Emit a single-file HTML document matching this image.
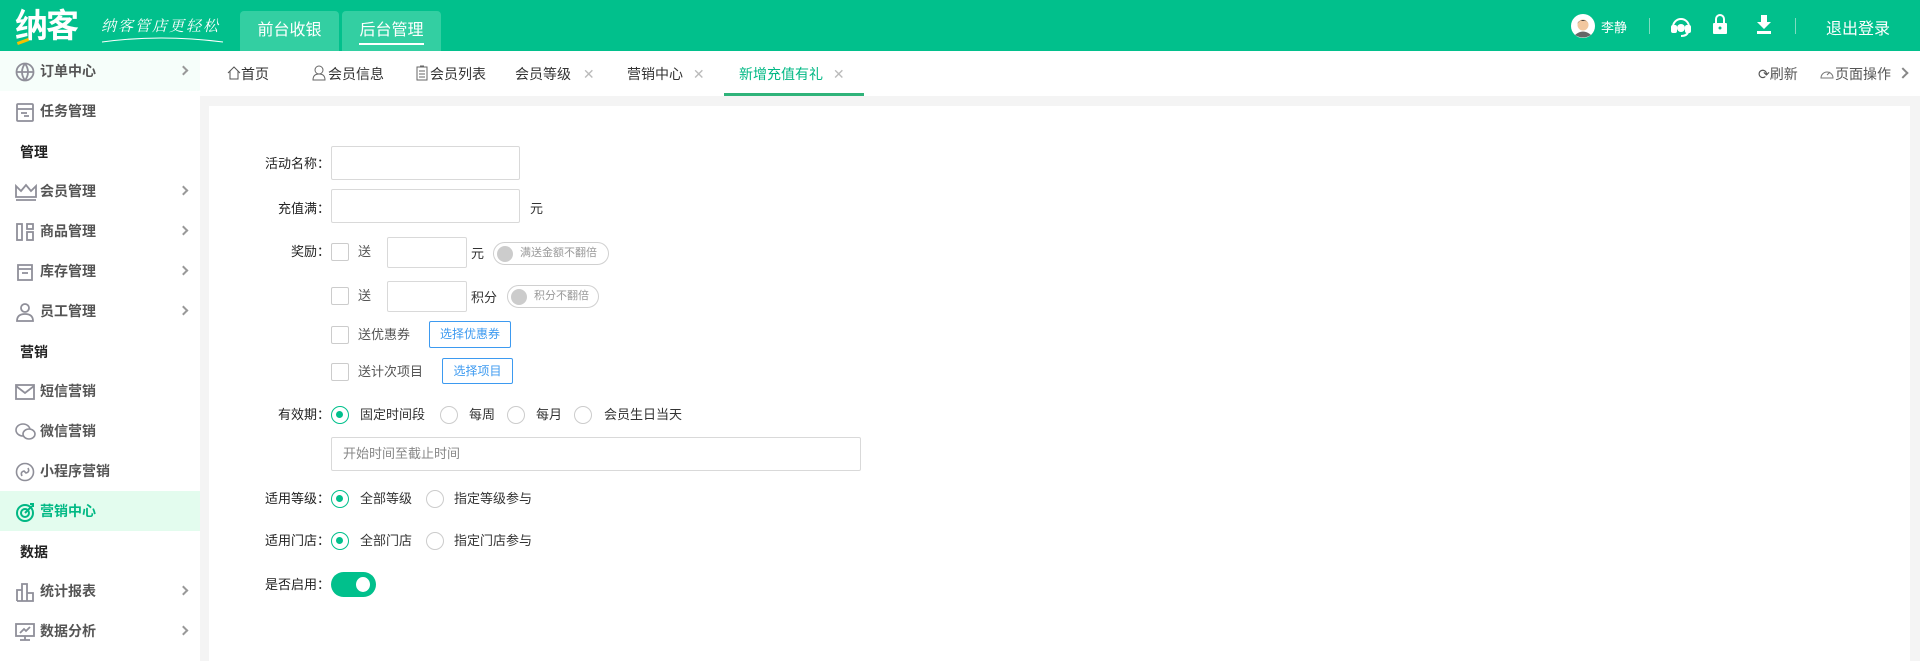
<!DOCTYPE html>
<html><head><meta charset="utf-8"><style>
*{margin:0;padding:0;box-sizing:border-box}
body{width:1920px;height:661px;overflow:hidden;background:#f4f4f4;font-family:"Liberation Sans","Noto Sans CJK SC",sans-serif;position:relative}
.a{position:absolute;white-space:nowrap}
#hd{position:absolute;left:0;top:0;width:1920px;height:51px;background:#01c08c}
.tt{position:absolute;top:11px;height:40px;width:99px;background:#33cfa2;border-radius:4px 4px 0 0;color:#fff;font-size:16px;text-align:center;line-height:40px}
#sb{position:absolute;left:0;top:51px;width:200px;height:610px;background:#fff}
.si{position:absolute;left:0;width:200px;height:40px;font-size:14px;color:#555;font-weight:bold}
.si svg{position:absolute;left:15px;top:11px}
.si span{position:absolute;left:40px;top:11px;line-height:18px}
.si i{position:absolute;left:180px;top:16px;width:7px;height:7px;border-top:2px solid #999;border-right:2px solid #999;transform:rotate(45deg)}
.sh{position:absolute;left:20px;font-size:14px;color:#222;font-weight:bold}
#tb{position:absolute;left:200px;top:51px;width:1720px;height:45px;background:#fff}
.tab{position:absolute;top:14px;font-size:14px;color:#333;line-height:18px}
.x{color:#bbb;font-size:14px}
#ct{position:absolute;left:209px;top:106px;width:1701px;height:555px;background:#fff}
.f{font-size:13px;color:#333;line-height:16px}
.lb{position:absolute;width:140px;text-align:right;left:190px;font-size:13px;color:#222;line-height:16px}
.in{position:absolute;border:1px solid #d9d9d9;border-radius:2px;background:#fff}
.cb{position:absolute;width:18px;height:18px;border:1px solid #ccc;border-radius:2px;background:#fff}
.rd{position:absolute;width:18px;height:18px;border:1.5px solid #ccc;border-radius:50%;background:#fff}
.rd.on{border-color:#01c08c}
.rd.on:after{content:"";position:absolute;left:4px;top:4px;width:7px;height:7px;border-radius:50%;background:#01c08c}
.pill{position:absolute;height:23px;border:1px solid #d0d0d0;border-radius:12px;background:#fff;font-size:11px;color:#999;line-height:21px;padding-left:26px;white-space:nowrap}
.pill:before{content:"";position:absolute;left:3px;top:3px;width:16px;height:16px;border-radius:50%;background:#ccc}
.btn{position:absolute;border:1px solid #3d9af0;border-radius:2px;color:#3d9af0;font-size:12px;text-align:center;white-space:nowrap}
</style></head><body>
<div id="hd">
 <div class="a" style="left:15px;top:8px;font-size:33px;font-weight:bold;color:#fff;letter-spacing:-2px;line-height:36px">纳客</div>
 <div class="a" style="left:17px;top:40px;width:12px;height:3px;background:#f5c000;transform:rotate(-20deg)"></div>
 <div class="a" style="left:101px;top:15px;font-size:15px;color:#fff;font-style:italic;letter-spacing:2px;font-family:'Liberation Serif','Noto Serif CJK SC',serif">纳客管店更轻松</div>
 <svg class="a" style="left:100px;top:34px" width="125" height="10"><path d="M2 8 Q60 0 123 8" stroke="#fff" stroke-width="1" fill="none"/></svg>
 <div class="tt" style="left:240px">前台收银</div>
 <div class="tt" style="left:342px">后台管理<div style="position:absolute;left:17px;right:17px;top:32px;height:2px;background:#fff"></div></div>
 <svg class="a" style="left:1571px;top:14px" width="24" height="24"><circle cx="12" cy="12" r="12" fill="#fff"/><circle cx="12" cy="11" r="5.5" fill="#f2c8a0"/><path d="M6 10 Q12 2 18 10 Q15 6 12 7 Q8 6 6 10Z" fill="#333"/><path d="M4 21 Q12 14 20 21 Q12 26 4 21Z" fill="#666"/></svg>
 <div class="a" style="left:1601px;top:17px;font-size:13px;color:#fff">李静</div>
 <div class="a" style="left:1649px;top:18px;width:1px;height:16px;background:#7edcc0"></div>
 <svg class="a" style="left:1670px;top:14px" width="22" height="24" fill="none" stroke="#fff" stroke-width="2"><path d="M3 13 A8 8 0 0 1 19 13"/><rect x="2" y="12" width="4" height="6" rx="1" fill="#fff"/><rect x="16" y="12" width="4" height="6" rx="1" fill="#fff"/><path d="M18 18 Q17 22 11 22"/><circle cx="11" cy="14" r="4" fill="#fff" stroke="none"/></svg>
 <svg class="a" style="left:1712px;top:13px" width="16" height="22"><path d="M4 10 V6 A4 4 0 0 1 12 6 V10" stroke="#fff" stroke-width="2" fill="none"/><rect x="1" y="10" width="14" height="11" rx="1" fill="#fff"/><circle cx="8" cy="15" r="1.5" fill="#01c08c"/></svg>
 <svg class="a" style="left:1756px;top:14px" width="16" height="22" fill="#fff"><path d="M5 1 H11 V8 H15 L8 15 L1 8 H5Z"/><rect x="1" y="17" width="14" height="3"/></svg>
 <div class="a" style="left:1795px;top:18px;width:1px;height:16px;background:#7edcc0"></div>
 <div class="a" style="left:1826px;top:15px;font-size:16px;color:#fff">退出登录</div>
</div>
<div id="sb">
 <div class="si" style="top:0;background:#f6fefa"><svg width="20" height="20" fill="none" stroke="#8f8f99" stroke-width="1.8"><circle cx="10" cy="10" r="8.5"/><path d="M1.5 10 H18.5 M10 1.5 Q4 10 10 18.5 M10 1.5 Q16 10 10 18.5"/></svg><span>订单中心</span><i></i></div>
 <div class="si" style="top:40px"><svg width="20" height="20" fill="none" stroke="#8f8f99" stroke-width="1.8"><rect x="2" y="2" width="16" height="17" rx="1"/><path d="M2 7 H18 M6 11 H12 M9 14 H14"/></svg><span>任务管理</span></div>
 <div class="sh" style="top:91px">管理</div>
 <div class="si" style="top:120px"><svg width="22" height="20" fill="none" stroke="#8f8f99" stroke-width="1.8"><path d="M1 15 V4 L6 9 L11 3 L16 9 L21 4 V15Z"/><path d="M1 18 H21"/></svg><span>会员管理</span><i></i></div>
 <div class="si" style="top:160px"><svg width="20" height="20" fill="none" stroke="#8f8f99" stroke-width="1.8"><rect x="2" y="2" width="5" height="16"/><rect x="12" y="2" width="6" height="5"/><rect x="12" y="10" width="6" height="8"/></svg><span>商品管理</span><i></i></div>
 <div class="si" style="top:200px"><svg width="20" height="20" fill="none" stroke="#8f8f99" stroke-width="1.8"><path d="M3 3 H17 V7 H3Z M3 7 V18 H17 V7 M7 11 H13"/></svg><span>库存管理</span><i></i></div>
 <div class="si" style="top:240px"><svg width="20" height="20" fill="none" stroke="#8f8f99" stroke-width="1.8"><circle cx="10" cy="6" r="4"/><path d="M2 19 Q2 12 10 12 Q18 12 18 19Z"/></svg><span>员工管理</span><i></i></div>
 <div class="sh" style="top:291px">营销</div>
 <div class="si" style="top:320px"><svg width="20" height="20" fill="none" stroke="#8f8f99" stroke-width="1.8"><rect x="1" y="3" width="18" height="14"/><path d="M1 4 L10 11 L19 4"/></svg><span>短信营销</span></div>
 <div class="si" style="top:360px"><svg width="22" height="20" fill="none" stroke="#8f8f99" stroke-width="1.6"><ellipse cx="8" cy="8" rx="7" ry="6"/><ellipse cx="14" cy="12" rx="6" ry="5" fill="#fff"/></svg><span>微信营销</span></div>
 <div class="si" style="top:400px"><svg width="20" height="20" fill="none" stroke="#8f8f99" stroke-width="1.6"><circle cx="10" cy="10" r="8.5"/><path d="M7 14 Q5 10 9 9 L11 11 Q15 10 13 6"/></svg><span>小程序营销</span></div>
 <div class="si" style="top:440px;background:#e3fcee;color:#01b884"><svg width="20" height="20" fill="none" stroke="#01b884" stroke-width="2"><circle cx="10" cy="11" r="8"/><circle cx="10" cy="11" r="4"/><path d="M10 11 L17 4 M15 2 L18 2 L18 5"/></svg><span>营销中心</span></div>
 <div class="sh" style="top:491px">数据</div>
 <div class="si" style="top:520px"><svg width="20" height="20" fill="none" stroke="#8f8f99" stroke-width="1.8"><path d="M2 19 V8 H7 V19 M7 19 V2 H12 V19 M12 19 V11 H18 V19 H2"/></svg><span>统计报表</span><i></i></div>
 <div class="si" style="top:560px"><svg width="20" height="20" fill="none" stroke="#8f8f99" stroke-width="1.8"><rect x="1" y="2" width="18" height="12"/><path d="M5 11 L9 7 L11 9 L15 5 M10 14 V18 M5 18 H15"/></svg><span>数据分析</span><i></i></div>
</div>
<div id="tb">
 <svg class="a" style="left:27px;top:15px" width="14" height="14" fill="none" stroke="#555" stroke-width="1"><path d="M1 7 L7 1 L13 7 M3 5 V13 H11 V5"/></svg>
 <div class="tab" style="left:41px">首页</div>
 <svg class="a" style="left:112px;top:14px" width="14" height="16" fill="none" stroke="#666" stroke-width="1"><circle cx="7" cy="5" r="4"/><path d="M1 15 Q1 9 7 9 Q13 9 13 15Z"/></svg>
 <div class="tab" style="left:128px">会员信息</div>
 <svg class="a" style="left:216px;top:14px" width="12" height="16" fill="none" stroke="#666" stroke-width="1"><rect x="1" y="2" width="10" height="13"/><path d="M4 1 H8 M3 6 H9 M3 9 H9 M3 12 H9"/></svg>
 <div class="tab" style="left:230px">会员列表</div>
 <div class="tab" style="left:315px">会员等级 <span class="x" style="margin-left:8px">✕</span></div>
 <div class="tab" style="left:427px">营销中心 <span class="x" style="margin-left:6px">✕</span></div>
 <div class="tab" style="left:539px;color:#01b884">新增充值有礼 <span class="x" style="margin-left:6px">✕</span></div>
 <div class="a" style="left:524px;top:42px;width:140px;height:3px;background:#2fb37a"></div>
 <div class="tab" style="left:1558px;color:#555">⟳刷新</div>
 <svg class="a" style="left:1620px;top:16px" width="14" height="14" fill="none" stroke="#777" stroke-width="1"><path d="M1 11 A6 6 0 1 1 13 11Z M7 8 L10 5"/></svg>
 <div class="tab" style="left:1635px;color:#555">页面操作</div>
 <div class="a" style="left:1699px;top:18px;width:8px;height:8px;border-top:2px solid #888;border-right:2px solid #888;transform:rotate(45deg)"></div>
</div>
<div id="ct"></div>
<div class="lb" style="top:156px">活动名称：</div>
<div class="in" style="left:331px;top:146px;width:189px;height:34px"></div>
<div class="lb" style="top:201px">充值满：</div>
<div class="in" style="left:331px;top:189px;width:189px;height:34px"></div>
<div class="a f" style="left:530px;top:201px">元</div>
<div class="lb" style="top:244px">奖励：</div>
<div class="cb" style="left:331px;top:243px"></div>
<div class="a f" style="left:358px;top:244px;color:#555">送</div>
<div class="in" style="left:387px;top:237px;width:80px;height:31px"></div>
<div class="a f" style="left:471px;top:246px">元</div>
<div class="pill" style="left:493px;top:242px;width:116px">满送金额不翻倍</div>
<div class="cb" style="left:331px;top:287px"></div>
<div class="a f" style="left:358px;top:288px;color:#555">送</div>
<div class="in" style="left:387px;top:281px;width:80px;height:31px"></div>
<div class="a f" style="left:471px;top:290px">积分</div>
<div class="pill" style="left:507px;top:285px;width:92px">积分不翻倍</div>
<div class="cb" style="left:331px;top:326px"></div>
<div class="a f" style="left:358px;top:327px;color:#555">送优惠券</div>
<div class="btn" style="left:429px;top:321px;width:82px;height:27px;line-height:25px">选择优惠券</div>
<div class="cb" style="left:331px;top:363px"></div>
<div class="a f" style="left:358px;top:364px;color:#555">送计次项目</div>
<div class="btn" style="left:442px;top:358px;width:71px;height:26px;line-height:24px">选择项目</div>
<div class="lb" style="top:407px">有效期：</div>
<div class="rd on" style="left:331px;top:406px"></div><div class="a f" style="left:360px;top:407px">固定时间段</div>
<div class="rd" style="left:440px;top:406px"></div><div class="a f" style="left:469px;top:407px">每周</div>
<div class="rd" style="left:507px;top:406px"></div><div class="a f" style="left:536px;top:407px">每月</div>
<div class="rd" style="left:574px;top:406px"></div><div class="a f" style="left:604px;top:407px">会员生日当天</div>
<div class="in" style="left:331px;top:437px;width:530px;height:34px"></div>
<div class="a f" style="left:343px;top:446px;color:#888">开始时间至截止时间</div>
<div class="lb" style="top:491px">适用等级：</div>
<div class="rd on" style="left:331px;top:490px"></div><div class="a f" style="left:360px;top:491px">全部等级</div>
<div class="rd" style="left:426px;top:490px"></div><div class="a f" style="left:454px;top:491px">指定等级参与</div>
<div class="lb" style="top:533px">适用门店：</div>
<div class="rd on" style="left:331px;top:532px"></div><div class="a f" style="left:360px;top:533px">全部门店</div>
<div class="rd" style="left:426px;top:532px"></div><div class="a f" style="left:454px;top:533px">指定门店参与</div>
<div class="lb" style="top:577px">是否启用：</div>
<div class="a" style="left:331px;top:572px;width:45px;height:25px;border-radius:13px;background:#01c08c"><div style="position:absolute;right:6px;top:5px;width:14px;height:15px;border-radius:50%;background:#fff"></div></div>
</body></html>
